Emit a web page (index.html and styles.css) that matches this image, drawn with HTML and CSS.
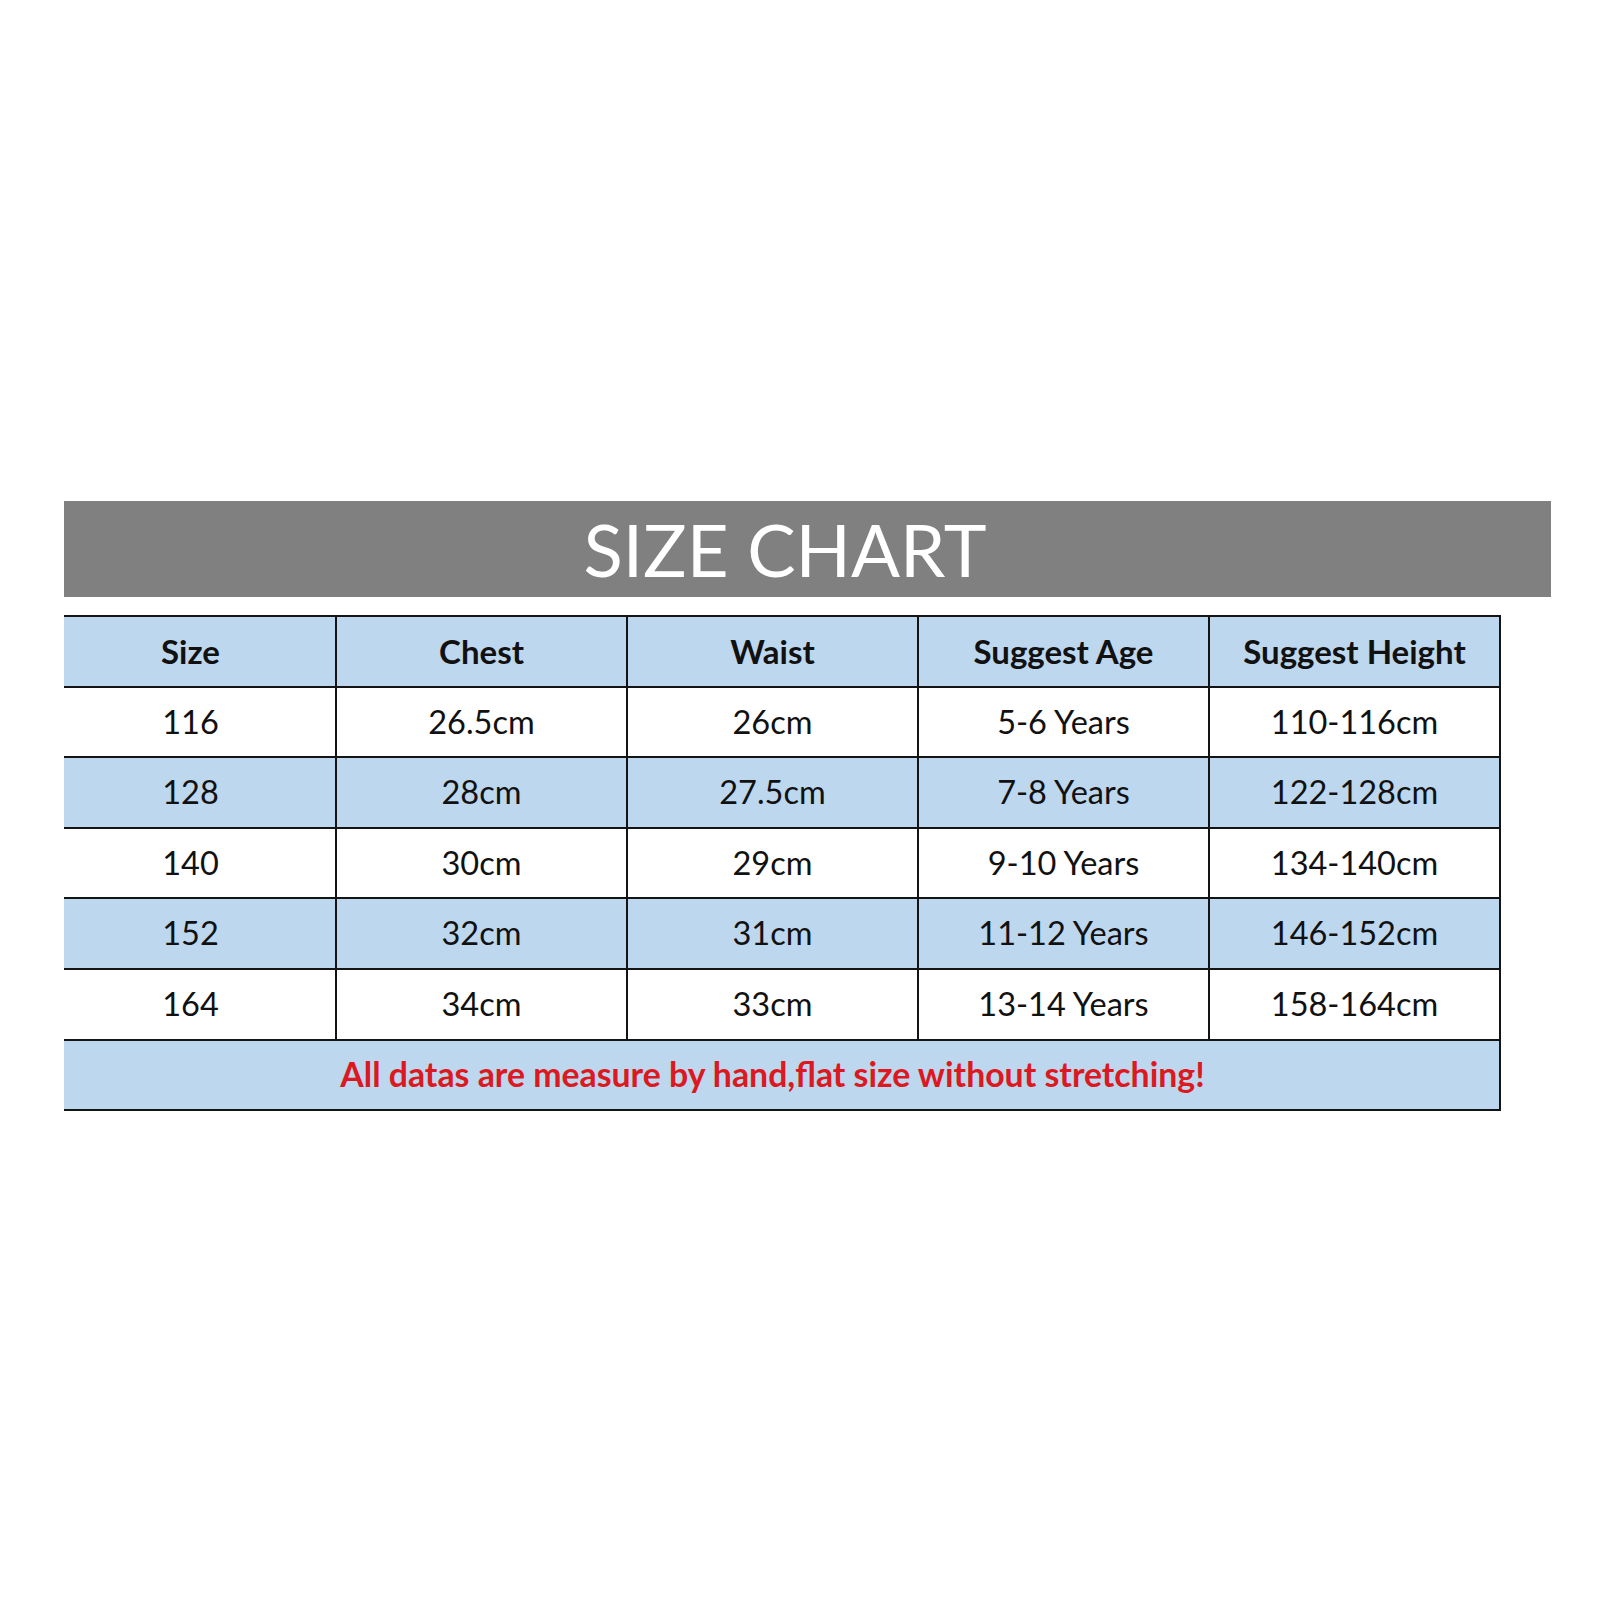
FILE: index.html
```html
<!DOCTYPE html>
<html lang="en">
<head>
<meta charset="utf-8">
<title>Size Chart</title>
<link rel="stylesheet" href="styles.css">
</head>
<body>
<div class="page">
  <div class="title-bar"><h1 class="title">SIZE CHART</h1></div>
  <table class="chart">
    <colgroup>
      <col class="c-size"><col class="c-col"><col class="c-col"><col class="c-col"><col class="c-col">
    </colgroup>
    <thead>
      <tr class="row-blue">
        <th>Size</th><th>Chest</th><th>Waist</th><th>Suggest Age</th><th>Suggest Height</th>
      </tr>
    </thead>
    <tbody>
      <tr class="row-white"><td>116</td><td>26.5cm</td><td>26cm</td><td>5-6 Years</td><td>110-116cm</td></tr>
      <tr class="row-blue"><td>128</td><td>28cm</td><td>27.5cm</td><td>7-8 Years</td><td>122-128cm</td></tr>
      <tr class="row-white"><td>140</td><td>30cm</td><td>29cm</td><td>9-10 Years</td><td>134-140cm</td></tr>
      <tr class="row-blue"><td>152</td><td>32cm</td><td>31cm</td><td>11-12 Years</td><td>146-152cm</td></tr>
      <tr class="row-white"><td>164</td><td>34cm</td><td>33cm</td><td>13-14 Years</td><td>158-164cm</td></tr>
      <tr class="row-blue"><td colspan="5" class="note">All datas are measure by hand,flat size without stretching!</td></tr>
    </tbody>
  </table>
</div>
</body>
</html>
```

FILE: styles.css
```css
html, body {
  margin: 0;
  padding: 0;
  background: #ffffff;
}

.page {
  padding: 501px 0 0 64px;
  font-family: Lato, "Open Sans", "Liberation Sans", sans-serif;
}

.title-bar {
  width: 1487px;
  height: 96px;
  background: #808080;
  box-sizing: border-box;
  padding-right: 45px;
  display: flex;
  align-items: center;
  justify-content: center;
}

.title {
  margin: 0;
  color: #ffffff;
  font-weight: 400;
  font-size: 72.5px;
  line-height: 1;
  letter-spacing: 0;
}

.chart {
  margin-top: 18px;
  width: 1437px;
  border-collapse: collapse;
  table-layout: fixed;
}

.c-size { width: 272px; }
.c-col { width: 291px; }

.chart th,
.chart td {
  height: 68.6px;
  padding: 0;
  border: 2px solid #141414;
  text-align: center;
  vertical-align: middle;
  color: #111111;
  line-height: 1;
}

.chart tr > :first-child {
  border-left: none;
  padding-right: 18px;
}

.chart th {
  font-weight: 700;
  font-size: 33px;
}

.chart td {
  font-weight: 400;
  font-size: 32.5px;
}

.row-blue { background: #bdd7ee; }
.row-white { background: #ffffff; }

.chart td.note {
  color: #dc1820;
  font-weight: 700;
  font-size: 33.8px;
  padding-right: 18px;
}
```
